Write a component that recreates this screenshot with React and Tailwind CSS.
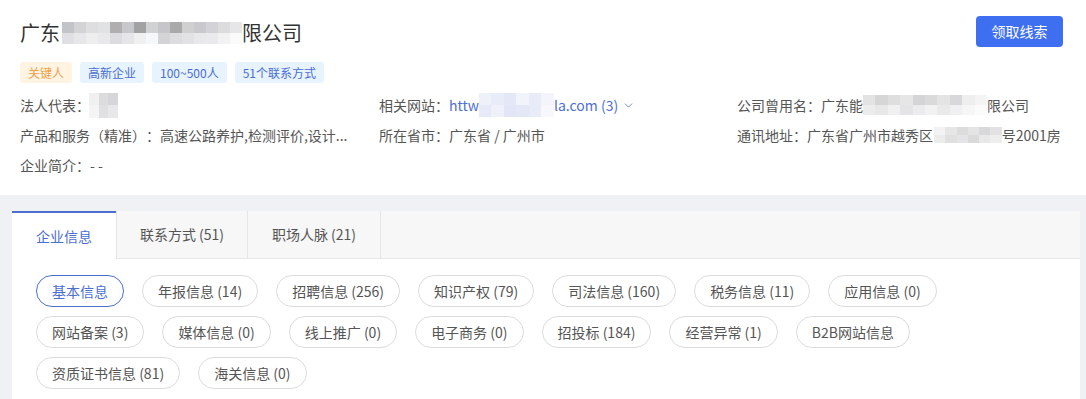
import React from "react";
import { ChevronDown } from "lucide-react";

function Mosaic({ rows, cellW, cellH, className = "" }) {
  return (
    <span className={"inline-flex flex-col align-middle shrink-0 " + className}>
      {rows.map((row, i) => (
        <span key={i} className="flex">
          {row.map((c, j) => (
            <span key={j} className={c} style={{ width: cellW, height: cellH }} />
          ))}
        </span>
      ))}
    </span>
  );
}

const titleRows = [
  ["bg-[#c3c3ca]", "bg-[#d3d3d6]", "bg-[#dedee0]", "bg-[#e0e2e4]", "bg-[#b1aeb0]", "bg-[#c6c8cc]", "bg-[#a2a2a4]", "bg-[#d0d2d4]", "bg-[#c6c6ca]", "bg-[#aaa9aa]", "bg-[#d0d0d0]", "bg-[#c9c9cd]", "bg-[#d3d3d7]", "bg-[#dcdcde]", "bg-[#e6e6e8]"],
  ["bg-[#e0e0e4]", "bg-[#e7e7ea]", "bg-[#eeeeef]", "bg-[#e9e9ec]", "bg-[#dcdce0]", "bg-[#e6e6e9]", "bg-[#f0f0f1]", "bg-[#f6f7fa]", "bg-[#d4d4d7]", "bg-[#dddde0]", "bg-[#e2e2e5]", "bg-[#e8e8ea]", "bg-[#eaeaec]", "bg-[#f2f2f3]", "bg-[#fafafa]"],
];

const legalRows = [
  ["bg-[#f0f0f0]", "bg-[#dcdcdc]", "bg-[#d6d6d8]"],
  ["bg-[#f4f4f4]", "bg-[#e0e0e2]", "bg-[#e8e8ea]"],
];

const siteRows = [
  ["bg-[#eef0fa]", "bg-[#e8ebf8]", "bg-[#e4e8f6]", "bg-[#f2f4fb]", "bg-[#e9ecf8]", "bg-[#f4f5fc]"],
  ["bg-[#e6e9f7]", "bg-[#eef0fa]", "bg-[#e1e5f5]", "bg-[#e3e7f6]", "bg-[#e8ebf8]", "bg-[#f7f8fd]"],
];

const nameRows = [
  ["bg-[#e3e3e3]", "bg-[#d6d6d6]", "bg-[#dedede]", "bg-[#e6e6e6]", "bg-[#d4d4d6]", "bg-[#dadada]", "bg-[#e4e4e4]", "bg-[#d8d8da]", "bg-[#eeeeee]", "bg-[#f4f4f4]"],
  ["bg-[#ececec]", "bg-[#e8e8e8]", "bg-[#f0f0f0]", "bg-[#e4e4e6]", "bg-[#ececee]", "bg-[#f2f2f2]", "bg-[#eaeaea]", "bg-[#f0f0f2]", "bg-[#f6f6f6]", "bg-[#fbfbfb]"],
];

const addrRows = [
  ["bg-[#f2f2f2]", "bg-[#e6e6e6]", "bg-[#dcdcdc]", "bg-[#e4e4e4]", "bg-[#d8d8da]", "bg-[#e2e2e2]"],
  ["bg-[#ececec]", "bg-[#e0e0e0]", "bg-[#e4e4e6]", "bg-[#dadada]", "bg-[#e8e8e8]", "bg-[#eeeeee]"],
];

const tags = [
  { t: "关键人", c: "bg-[#fff3e2] text-[#f0a04a]" },
  { t: "高新企业", c: "bg-[#e7f3ff] text-[#4a6cd0]" },
  { t: "100~500人", c: "bg-[#e7f3ff] text-[#4a6cd0]" },
  { t: "51个联系方式", c: "bg-[#e7f3ff] text-[#4a6cd0]" },
];

const pills = [
  "基本信息",
  "年报信息 (14)",
  "招聘信息 (256)",
  "知识产权 (79)",
  "司法信息 (160)",
  "税务信息 (11)",
  "应用信息 (0)",
  "网站备案 (3)",
  "媒体信息 (0)",
  "线上推广 (0)",
  "电子商务 (0)",
  "招投标 (184)",
  "经营异常 (1)",
  "B2B网站信息",
  "资质证书信息 (81)",
  "海关信息 (0)",
];

export default function App() {
  return (
    <div
      className="w-[1086px] h-[399px] overflow-hidden bg-[#f0f1f5] [text-spacing-trim:space-all]"
      style={{ fontFamily: '"Noto Sans CJK SC", "Noto Sans", sans-serif' }}
    >
      {/* Header panel */}
      <div className="h-[195px] bg-white pl-5 pr-[23px] pt-4">
        <div className="flex items-start justify-between">
          <div className="mt-[3px] flex items-center h-[28px] text-[20px] leading-[28px] text-[#333]">
            <span>广东</span>
            <Mosaic rows={titleRows} cellW={12} cellH={11} className="ml-[2px] blur-[0.6px]" />
            <span>限公司</span>
          </div>
          <button className="h-[31px] w-[87px] rounded-[4px] bg-[#3f6ff1] text-[14px] text-white">
            领取线索
          </button>
        </div>

        <div className="mt-[15px] flex gap-2">
          {tags.map((tg) => (
            <span
              key={tg.t}
              className={"h-[21px] rounded-[3px] px-[8px] text-[12px] leading-[21px] " + tg.c}
            >
              {tg.t}
            </span>
          ))}
        </div>

        <div className="mt-[7px] grid grid-cols-[359px_358px_1fr] text-[14px] leading-[30px] text-[#555]">
          <div className="flex items-center h-[30px]">
            <span>法人代表：</span>
            <Mosaic rows={legalRows} cellW={9.5} cellH={12.5} className="-ml-[1px] blur-[0.6px]" />
          </div>
          <div className="flex items-center h-[30px]">
            <span>相关网站：</span>
            <span className="text-[#4d6fd4]">httw</span>
            <Mosaic rows={siteRows} cellW={12.5} cellH={12} className="blur-[0.6px]" />
            <span className="text-[#4d6fd4]">la.com (3)</span>
            <ChevronDown className="ml-[4px] text-[#4d6fd4]" size={13} strokeWidth={1.5} />
          </div>
          <div className="flex items-center h-[30px] whitespace-nowrap">
            <span>公司曾用名：广东能</span>
            <Mosaic rows={nameRows} cellW={12.4} cellH={10} className="blur-[0.6px]" />
            <span>限公司</span>
          </div>

          <div className="h-[30px] whitespace-nowrap overflow-hidden">产品和服务（精准）：高速公路养护,检测评价,设计...</div>
          <div className="h-[30px]">所在省市：广东省 / 广州市</div>
          <div className="flex items-center h-[30px] whitespace-nowrap">
            <span>通讯地址：广东省广州市越秀区</span>
            <Mosaic rows={addrRows} cellW={11.3} cellH={8} className="ml-[1px] blur-[0.6px]" />
            <span>号2001房</span>
          </div>

          <div className="h-[30px]">企业简介：- -</div>
        </div>
      </div>

      {/* Card */}
      <div className="ml-3 mt-4 w-[1068px] h-[200px] bg-white">
        <div className="flex h-[48px] bg-[#f7f7f7] border-b border-[#e8e8e8] text-[14px]">
          <div className="w-[104px] h-[48px] -mb-px bg-white border-t-2 border-[#4a6fd0] flex items-center justify-center text-[#4a6fd0]">
            企业信息
          </div>
          <div className="w-[132px] flex items-center justify-center border-l border-r border-[#e6e6e6] text-[#555]">
            联系方式 (51)
          </div>
          <div className="w-[133px] flex items-center justify-center border-r border-[#e6e6e6] text-[#555]">
            职场人脉 (21)
          </div>
        </div>

        <div className="px-6 pt-4 flex flex-wrap gap-x-[18px] gap-y-[9px]">
          {pills.map((p, i) => (
            <span
              key={p}
              className={
                "h-[32px] rounded-full border px-[15px] text-[14px] leading-[30px] whitespace-nowrap " +
                (i === 0 ? "border-[#4a6fd0] text-[#4a6fd0]" : "border-[#dcdcdc] text-[#555]")
              }
            >
              {p}
            </span>
          ))}
        </div>
      </div>
    </div>
  );
}
